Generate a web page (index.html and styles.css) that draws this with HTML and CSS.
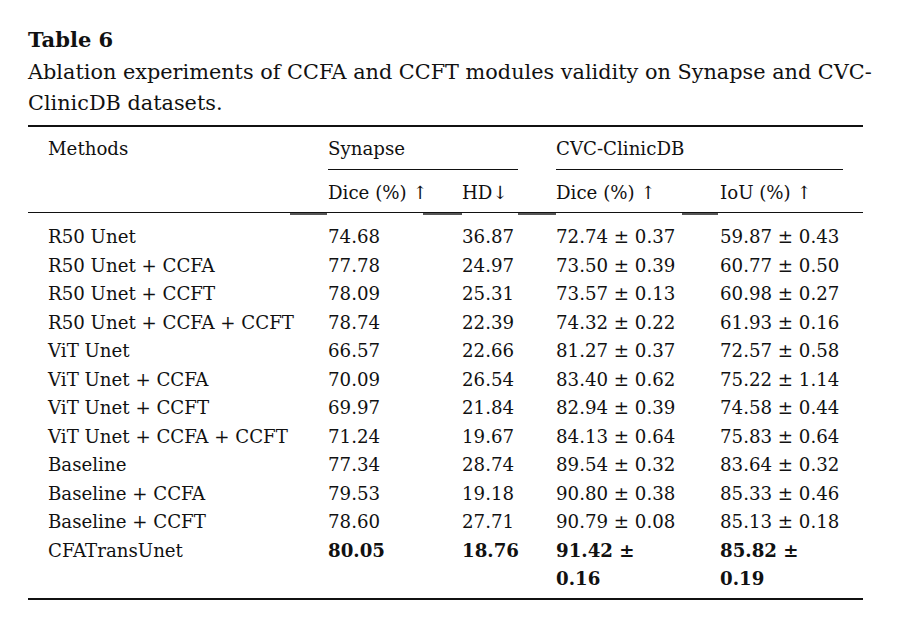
FILE: index.html
```html
<!DOCTYPE html>
<html>
<head>
<meta charset="utf-8">
<link rel="stylesheet" href="styles.css">
</head>
<body>
<div class="page">
  <div class="title">Table 6</div>
  <div class="caption">Ablation experiments of CCFA and CCFT modules validity on Synapse and CVC-<br>ClinicDB datasets.</div>
  <div class="table">
    <div class="rule top"></div>
    <div class="grid head1">
      <div class="c method">Methods</div>
      <div class="c span2"><span>Synapse</span></div>
      <div class="c span2b"><span>CVC-ClinicDB</span></div>
    </div>
    <div class="underlines">
      <div class="ul ul-syn"></div>
      <div class="ul ul-cvc"></div>
    </div>
    <div class="grid head2">
      <div class="c method"></div>
      <div class="c">Dice (%) ↑</div>
      <div class="c">HD↓</div>
      <div class="c">Dice (%) ↑</div>
      <div class="c">IoU (%) ↑</div>
    </div>
    <div class="rule mid"></div>
    <div class="grid body">
      <div class="c method">R50 Unet</div><div class="c">74.68</div><div class="c">36.87</div><div class="c">72.74 ± 0.37</div><div class="c">59.87 ± 0.43</div>
      <div class="c method">R50 Unet + CCFA</div><div class="c">77.78</div><div class="c">24.97</div><div class="c">73.50 ± 0.39</div><div class="c">60.77 ± 0.50</div>
      <div class="c method">R50 Unet + CCFT</div><div class="c">78.09</div><div class="c">25.31</div><div class="c">73.57 ± 0.13</div><div class="c">60.98 ± 0.27</div>
      <div class="c method">R50 Unet + CCFA + CCFT</div><div class="c">78.74</div><div class="c">22.39</div><div class="c">74.32 ± 0.22</div><div class="c">61.93 ± 0.16</div>
      <div class="c method">ViT Unet</div><div class="c">66.57</div><div class="c">22.66</div><div class="c">81.27 ± 0.37</div><div class="c">72.57 ± 0.58</div>
      <div class="c method">ViT Unet + CCFA</div><div class="c">70.09</div><div class="c">26.54</div><div class="c">83.40 ± 0.62</div><div class="c">75.22 ± 1.14</div>
      <div class="c method">ViT Unet + CCFT</div><div class="c">69.97</div><div class="c">21.84</div><div class="c">82.94 ± 0.39</div><div class="c">74.58 ± 0.44</div>
      <div class="c method">ViT Unet + CCFA + CCFT</div><div class="c">71.24</div><div class="c">19.67</div><div class="c">84.13 ± 0.64</div><div class="c">75.83 ± 0.64</div>
      <div class="c method">Baseline</div><div class="c">77.34</div><div class="c">28.74</div><div class="c">89.54 ± 0.32</div><div class="c">83.64 ± 0.32</div>
      <div class="c method">Baseline + CCFA</div><div class="c">79.53</div><div class="c">19.18</div><div class="c">90.80 ± 0.38</div><div class="c">85.33 ± 0.46</div>
      <div class="c method">Baseline + CCFT</div><div class="c">78.60</div><div class="c">27.71</div><div class="c">90.79 ± 0.08</div><div class="c">85.13 ± 0.18</div>
      <div class="c method">CFATransUnet</div><div class="c b">80.05</div><div class="c b">18.76</div><div class="c b">91.42 ±<br>0.16</div><div class="c b">85.82 ±<br>0.19</div>
    </div>
    <div class="rule bottom"></div>
  </div>
</div>
</body>
</html>
```
FILE: styles.css
```css
html, body {
  margin: 0;
  padding: 0;
  background: #fff;
}
.page {
  padding: 26px 0 0 28px;
  width: 862px;
  font-family: "DejaVu Serif", serif;
  color: #111;
}
.title {
  font-weight: bold;
  font-size: 21px;
  line-height: 28px;
}
.caption {
  font-size: 20.8px;
  line-height: 31px;
  margin-top: 3px;
  white-space: nowrap;
}
.table {
  width: 835px;
  margin-top: 6px;
  font-size: 18.2px;
}
.rule {
  height: 2px;
  background: #111;
}
.rule.mid {
  background:
    linear-gradient(to right,
      transparent 262px, #555 262px, #555 299px, transparent 299px,
      transparent 395px, #555 395px, #555 434px, transparent 434px,
      transparent 490px, #555 490px, #555 528px, transparent 528px,
      transparent 654px, #555 654px, #555 690px, transparent 690px) 0 1px / 100% 2px no-repeat,
    linear-gradient(#111, #111) 0 0 / 100% 1px no-repeat,
    #fff;
  height: 3px;
}
.grid {
  display: grid;
  grid-template-columns: 300px 134px 94px 164px 143px;
  line-height: 28.5px;
}
.method {
  padding-left: 20px;
}
.head1 {
  padding: 8px 0 5px;
}
.span2 {
  grid-column: 2 / span 2;
}
.span2b {
  grid-column: 4 / span 2;
}
.underlines {
  display: flex;
  height: 2px;
}
.ul {
  height: 1.5px;
  background: #111;
}
.ul-syn {
  margin-left: 300px;
  width: 190px;
}
.ul-cvc {
  margin-left: 38px;
  width: 287px;
}
.head2 {
  padding: 8px 0 5px;
}
.body {
  padding: 8px 0 4px;
}
.b {
  font-weight: bold;
}
```
